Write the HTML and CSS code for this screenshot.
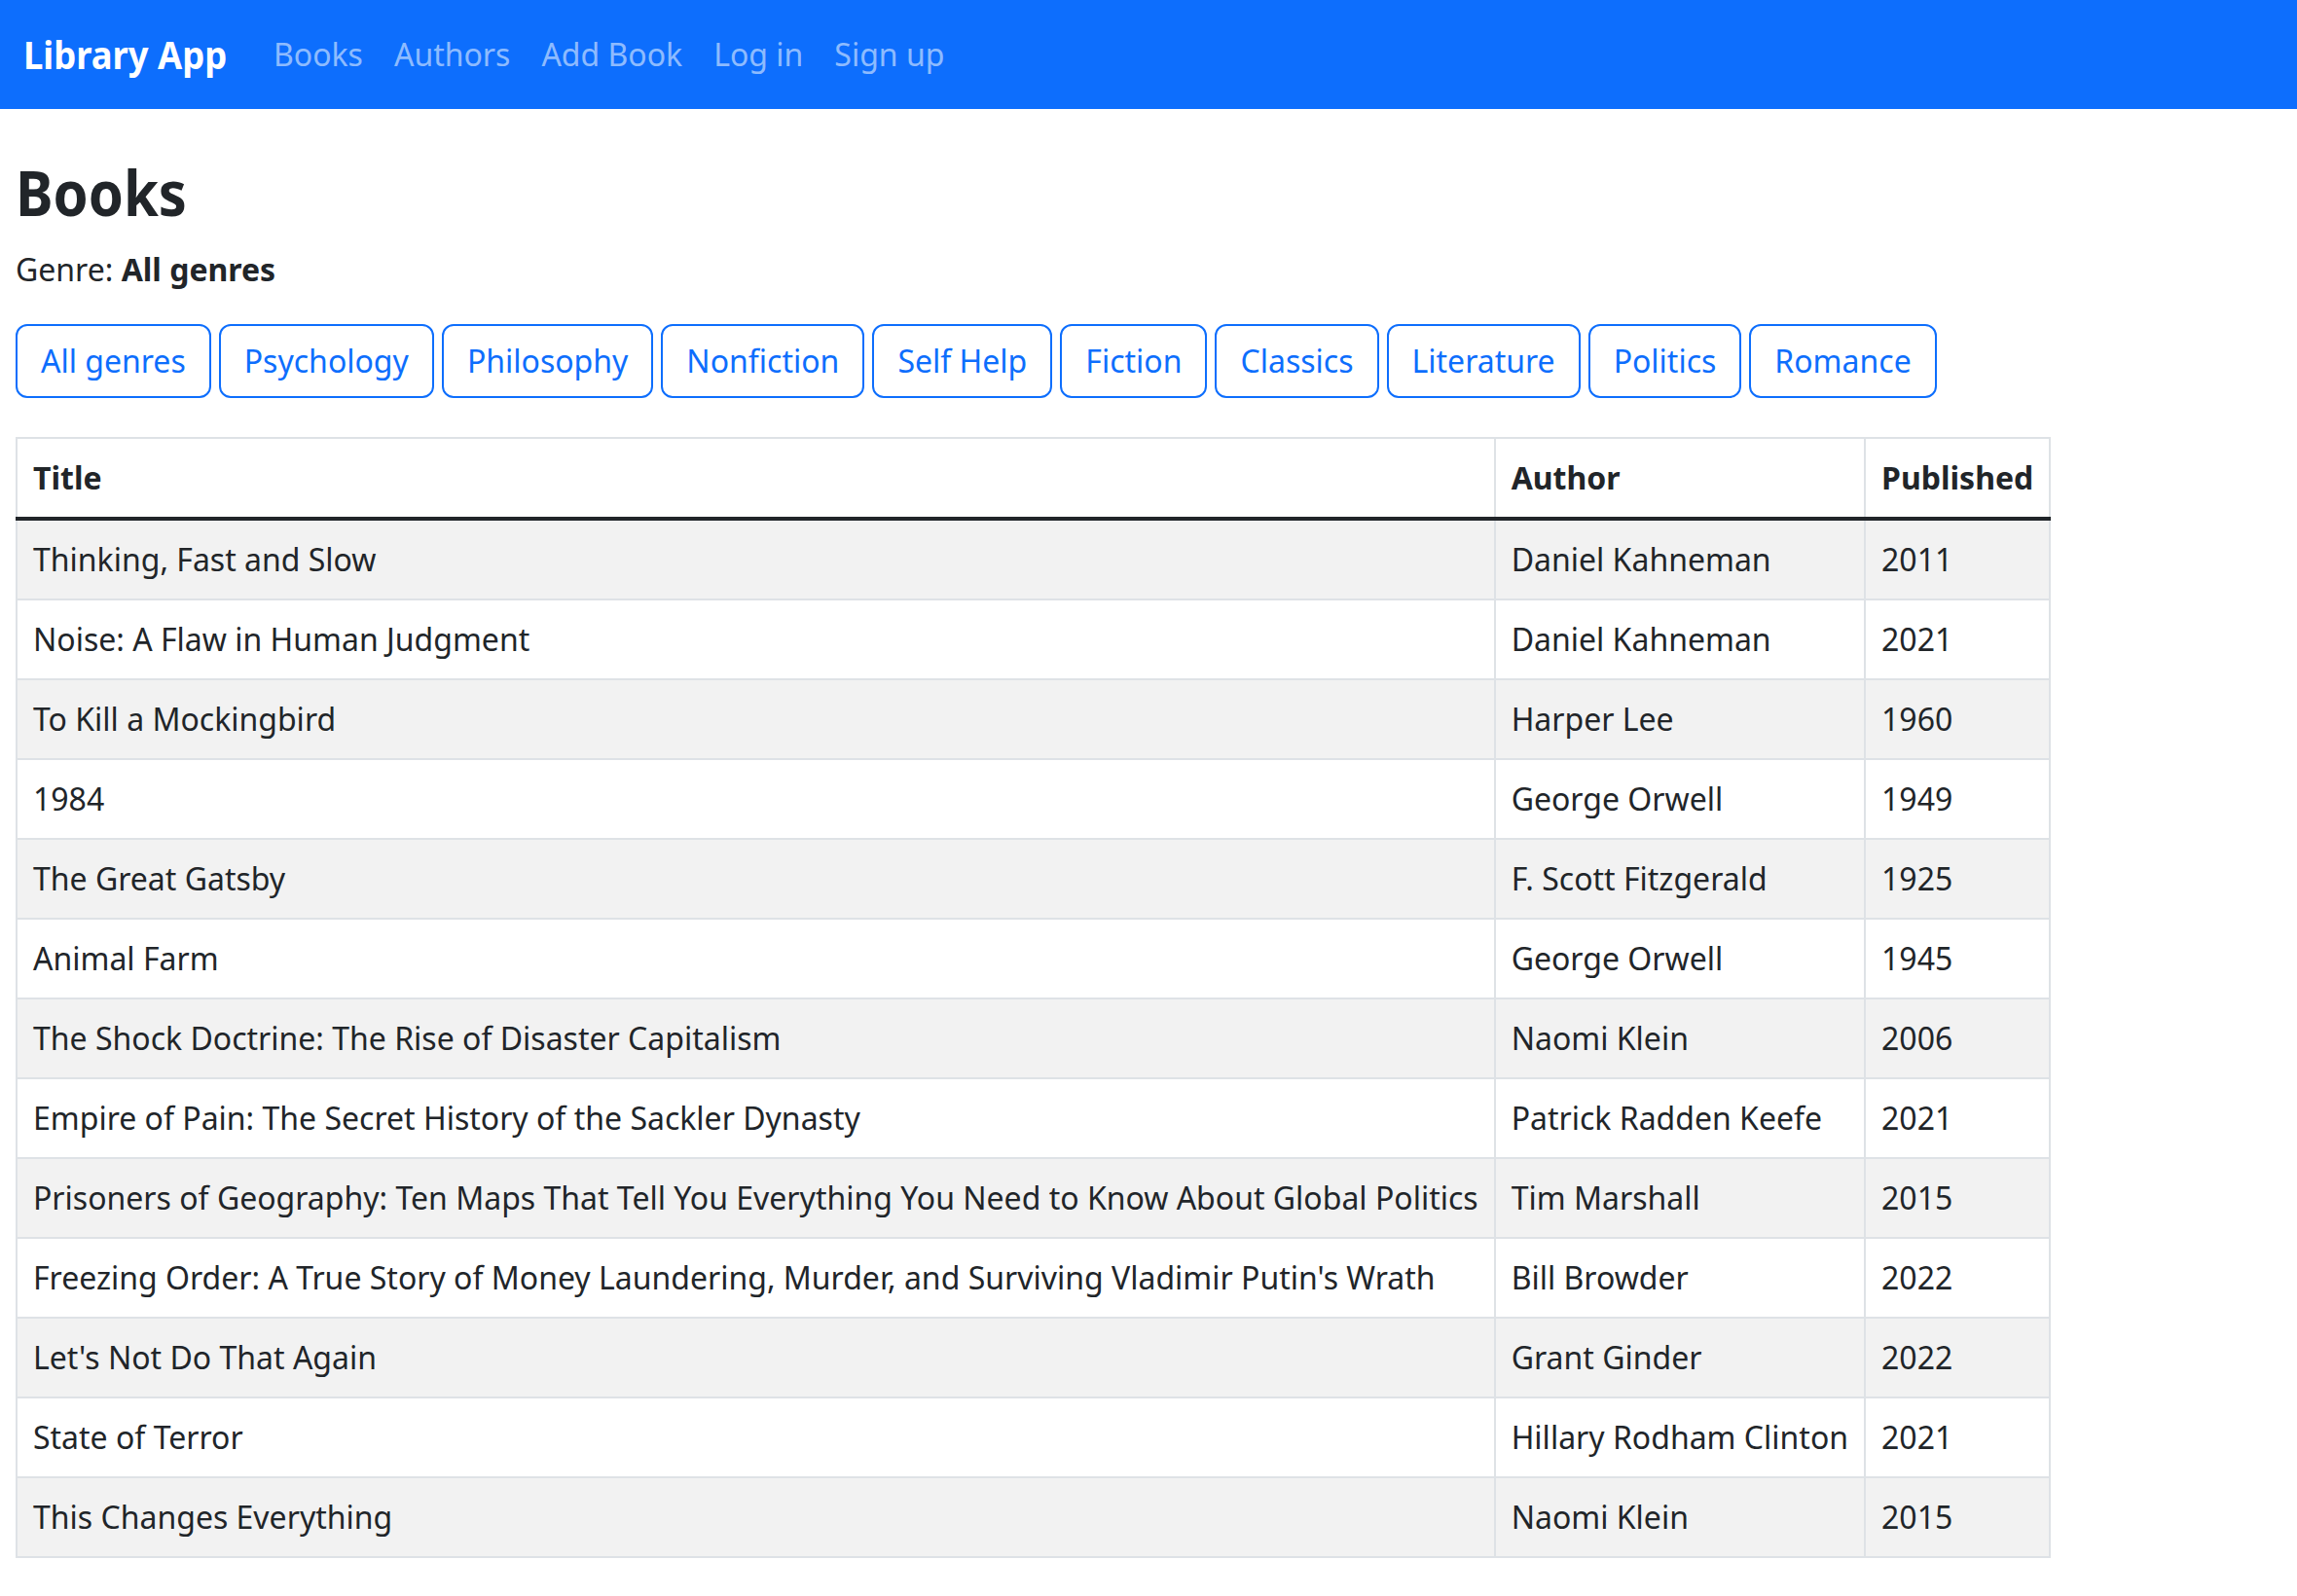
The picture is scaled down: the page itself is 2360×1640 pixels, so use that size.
FILE: index.html
```html
<!DOCTYPE html>
<html lang="en">
<head>
<meta charset="utf-8">
<title>Library App</title>
<link rel="stylesheet" href="styles.css">
</head>
<body>
<nav class="navbar">
  <a class="brand" href="#">Library App</a>
  <ul class="nav">
    <li><a class="nav-link" href="#">Books</a></li>
    <li><a class="nav-link" href="#">Authors</a></li>
    <li><a class="nav-link" href="#">Add Book</a></li>
    <li><a class="nav-link" href="#">Log in</a></li>
    <li><a class="nav-link" href="#">Sign up</a></li>
  </ul>
</nav>
<main class="content">
  <h1 class="title">Books</h1>
  <p class="genre">Genre: <strong>All genres</strong></p>
  <div class="filters">
    <a class="btn" href="#">All genres</a>
    <a class="btn" href="#">Psychology</a>
    <a class="btn" href="#">Philosophy</a>
    <a class="btn" href="#">Nonfiction</a>
    <a class="btn" href="#">Self Help</a>
    <a class="btn" href="#">Fiction</a>
    <a class="btn" href="#">Classics</a>
    <a class="btn" href="#">Literature</a>
    <a class="btn" href="#">Politics</a>
    <a class="btn" href="#">Romance</a>
  </div>
  <table class="books">
    <thead>
      <tr><th>Title</th><th>Author</th><th>Published</th></tr>
    </thead>
    <tbody>
      <tr><td>Thinking, Fast and Slow</td><td>Daniel Kahneman</td><td>2011</td></tr>
      <tr><td>Noise: A Flaw in Human Judgment</td><td>Daniel Kahneman</td><td>2021</td></tr>
      <tr><td>To Kill a Mockingbird</td><td>Harper Lee</td><td>1960</td></tr>
      <tr><td>1984</td><td>George Orwell</td><td>1949</td></tr>
      <tr><td>The Great Gatsby</td><td>F. Scott Fitzgerald</td><td>1925</td></tr>
      <tr><td>Animal Farm</td><td>George Orwell</td><td>1945</td></tr>
      <tr><td>The Shock Doctrine: The Rise of Disaster Capitalism</td><td>Naomi Klein</td><td>2006</td></tr>
      <tr><td>Empire of Pain: The Secret History of the Sackler Dynasty</td><td>Patrick Radden Keefe</td><td>2021</td></tr>
      <tr><td>Prisoners of Geography: Ten Maps That Tell You Everything You Need to Know About Global Politics</td><td>Tim Marshall</td><td>2015</td></tr>
      <tr><td>Freezing Order: A True Story of Money Laundering, Murder, and Surviving Vladimir Putin's Wrath</td><td>Bill Browder</td><td>2022</td></tr>
      <tr><td>Let's Not Do That Again</td><td>Grant Ginder</td><td>2022</td></tr>
      <tr><td>State of Terror</td><td>Hillary Rodham Clinton</td><td>2021</td></tr>
      <tr><td>This Changes Everything</td><td>Naomi Klein</td><td>2015</td></tr>
    </tbody>
  </table>
</main>
</body>
</html>
```
FILE: styles.css
```css
* { box-sizing: border-box; }
html, body { margin: 0; padding: 0; }
body {
  font-family: "Noto Sans", "DejaVu Sans", sans-serif;
  font-size: 32px;
  line-height: 1.5;
  color: #212529;
  background: #fff;
}
a { text-decoration: none; }

.navbar {
  display: flex;
  align-items: center;
  height: 112px;
  padding: 16px 24px;
  background: #0d6efd;
}
.brand {
  display: block;
  font-size: 40px;
  font-weight: 700;
  line-height: 60px;
  padding: 10px 0;
  margin-right: 11px;
  color: #fff;
  transform: scaleX(0.91);
  transform-origin: left center;
}
.nav {
  display: flex;
  list-style: none;
  margin: 0;
  padding: 0;
}
.nav-link {
  display: block;
  padding: 16px;
  color: rgba(255, 255, 255, 0.55);
}

.content { padding: 48px 16px 0; }
.title {
  font-size: 64px;
  font-weight: 700;
  line-height: 1.2;
  margin: 0 0 16px;
  transform: scaleX(0.905);
  transform-origin: left center;
}
.genre { margin: 0 0 32px; }

.filters {
  display: flex;
  flex-wrap: wrap;
  gap: 8px;
  margin-bottom: 40px;
}
.btn {
  display: inline-block;
  padding: 12px 24px;
  border: 2px solid #0d6efd;
  border-radius: 12px;
  color: #0d6efd;
  line-height: 48px;
}

.books {
  border-collapse: collapse;
  border: 2px solid #dee2e6;
}
.books th, .books td {
  padding: 16px;
  border: 2px solid #dee2e6;
  text-align: left;
  vertical-align: top;
  line-height: 48px;
}
.books th { font-weight: 700; }
.books thead tr th { border-bottom: 4px solid #212529; }
.books tbody tr:nth-child(odd) td { background: #f2f2f2; }
```
